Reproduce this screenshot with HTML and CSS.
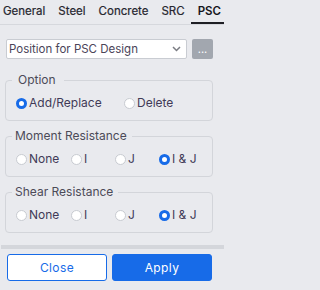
FILE: index.html
```html
<!DOCTYPE html>
<html lang="en">
<head>
<meta charset="utf-8">
<title>PSC</title>
<link rel="stylesheet" href="styles.css">
</head>
<body>
<div class="tabs">
  <span class="tab">General</span>
  <span class="tab">Steel</span>
  <span class="tab">Concrete</span>
  <span class="tab">SRC</span>
  <span class="tab active">PSC</span>
  <svg class="tab-arrow" width="5" height="7" viewBox="0 0 5 7"><path d="M5 0 L0 3.5 L5 7 Z" fill="#c4c7cc"/></svg>
</div>
<div class="main">
  <div class="selrow">
    <div class="select">
      <span class="select-text">Position for PSC Design</span>
      <svg class="chev" width="9" height="6" viewBox="0 0 9 6"><path d="M1 1 L4.5 4.5 L8 1" fill="none" stroke="#7a7c82" stroke-width="1.5"/></svg>
    </div>
    <button class="more">...</button>
  </div>
  <fieldset class="group first">
    <legend class="legend legend-option">Option</legend>
    <div class="radios radios-2">
      <label class="radio"><input type="radio" name="opt" checked><span>Add/Replace</span></label>
      <label class="radio"><input type="radio" name="opt"><span>Delete</span></label>
    </div>
  </fieldset>
  <fieldset class="group">
    <legend class="legend">Moment Resistance</legend>
    <div class="radios radios-4">
      <label class="radio"><input type="radio" name="mom"><span>None</span></label>
      <label class="radio"><input type="radio" name="mom"><span>I</span></label>
      <label class="radio"><input type="radio" name="mom"><span>J</span></label>
      <label class="radio"><input type="radio" name="mom" checked><span>I &amp; J</span></label>
    </div>
  </fieldset>
  <fieldset class="group">
    <legend class="legend">Shear Resistance</legend>
    <div class="radios radios-4">
      <label class="radio"><input type="radio" name="she"><span>None</span></label>
      <label class="radio"><input type="radio" name="she"><span>I</span></label>
      <label class="radio"><input type="radio" name="she"><span>J</span></label>
      <label class="radio"><input type="radio" name="she" checked><span>I &amp; J</span></label>
    </div>
  </fieldset>
</div>
<div class="separator"></div>
<div class="actions">
  <button class="btn btn-outline">Close</button>
  <button class="btn btn-primary">Apply</button>
</div>
</body>
</html>
```
FILE: styles.css
```css
html, body {
  margin: 0;
  padding: 0;
}
body {
  width: 224px;
  height: 290px;
  overflow: hidden;
  background: #e9eaee;
  font-family: Inter, "Noto Sans", sans-serif;
  color: #3e3950;
}
.tabs {
  display: flex;
  align-items: flex-start;
  gap: 13px;
  height: 24px;
  padding-left: 3px;
  padding-right: 2px;
  border-bottom: 1px solid #d6d8dd;
}
.tab {
  position: relative;
  height: 22px;
  line-height: 22px;
  font-size: 11.5px;
  font-weight: 400;
  color: #26262e;
  white-space: nowrap;
  -webkit-text-stroke: 0.2px #26262e;
}
.tab.active {
  font-weight: 600;
  color: #15151b;
  -webkit-text-stroke: 0;
}
.tab.active::after {
  content: "";
  position: absolute;
  left: -7px;
  right: -6px;
  top: 22px;
  height: 2px;
  background: #1e1e24;
}
.tab-arrow {
  margin-left: auto;
  margin-top: 8px;
}
.main {
  padding: 14px 11px 0 5px;
}
.selrow {
  display: flex;
  gap: 5px;
  padding-left: 1px;
  height: 20px;
}
.select {
  box-sizing: border-box;
  width: 181px;
  height: 20px;
  background: #fff;
  border: 1px solid #c9ccd2;
  border-radius: 2px;
  display: flex;
  align-items: center;
  justify-content: space-between;
  padding: 0 5px 0 2px;
}
.select-text {
  font-size: 11.5px;
  color: #4a4458;
  white-space: nowrap;
}
.chev {
  display: block;
}
.more {
  box-sizing: border-box;
  width: 21px;
  height: 20px;
  margin: 0;
  padding: 0 0 3px;
  border: none;
  border-radius: 2px;
  background: #a2a7af;
  color: #fff;
  font-family: Inter, sans-serif;
  font-size: 11px;
  line-height: 20px;
}
.group {
  margin: 8px 0 0;
  padding: 9px 10px 10px;
  border: 1px solid #d3d5da;
  border-radius: 4px;
  min-width: 0;
}
.group.first {
  margin-top: 14px;
}
.legend {
  font-size: 12px;
  line-height: 14px;
  padding: 0 5px 0 3px;
  margin-left: -4px;
  color: #4c4b58;
}
.legend-option {
  padding: 0 8px 0 6px;
}
.radios {
  display: grid;
  height: 14px;
  align-items: center;
}
.radios-2 {
  grid-template-columns: 108px auto;
}
.radios-4 {
  grid-template-columns: 55px 44px 44px auto;
}
.radio {
  display: flex;
  align-items: center;
  gap: 2px;
  font-size: 12px;
  line-height: 14px;
  color: #413a57;
  white-space: nowrap;
}
.radio input {
  appearance: none;
  -webkit-appearance: none;
  box-sizing: border-box;
  width: 11px;
  height: 11px;
  margin: 0;
  border: 1px solid #c8cbd1;
  border-radius: 50%;
  background: #fff;
  flex: none;
}
.radio input:checked {
  border: 3px solid #176be8;
}
.separator {
  height: 4px;
  margin: 12px 0 0 1px;
  background: #d4d6db;
}
.actions {
  display: flex;
  gap: 5px;
  padding: 5px 12px 0 7px;
}
.btn {
  box-sizing: border-box;
  width: 100px;
  height: 27px;
  margin: 0;
  border-radius: 3px;
  font-family: Inter, sans-serif;
  font-size: 12px;
  letter-spacing: 0.4px;
  border: 1px solid #176be8;
}
.btn-outline {
  background: #fff;
  color: #176be8;
}
.btn-primary {
  background: #176be8;
  color: #fff;
}
```
